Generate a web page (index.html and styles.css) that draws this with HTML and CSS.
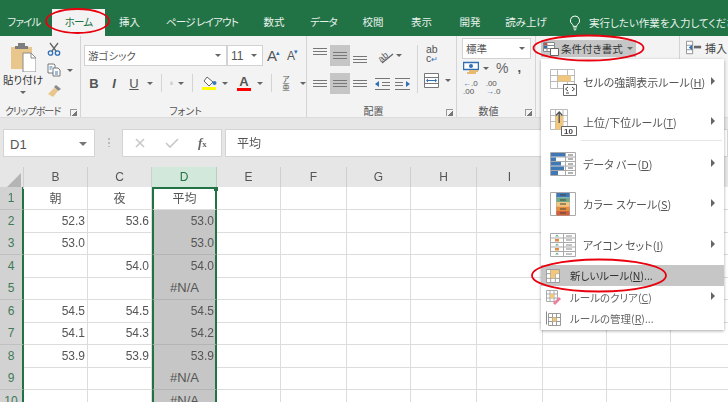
FILE: index.html
```html
<!DOCTYPE html>
<html lang="ja">
<head>
<meta charset="utf-8">
<title>条件付き書式</title>
<link rel="stylesheet" href="styles.css">
</head>
<body>
<div class="app">
  <nav class="tabs">
    <span class="tab w52 kana">ファイル</span>
    <span class="tab active kana">ホーム</span>
    <span class="tab w49">挿入</span>
    <span class="tab w96 kana">ページ レイアウト</span>
    <span class="tab w48">数式</span>
    <span class="tab w51 kana">データ</span>
    <span class="tab w48">校閲</span>
    <span class="tab w49">表示</span>
    <span class="tab w48">開発</span>
    <span class="tab w66">読み上げ</span>
    <span class="tell">
      <svg width="12" height="16" viewBox="0 0 12 16"><path d="M6 1a4.6 4.6 0 0 0-2.6 8.4c.6.5.8 1.2.8 2h3.6c0-.8.2-1.500.8-2A4.600 4.600 0 0 0 6 1zM4.300 13h3.400M4.800 14.800h2.400" fill="none" stroke="#fff" stroke-width="1"/></svg>
      実行したい作業を入力してください
    </span>
  </nav>

  <section class="ribbon">
    <div class="group g-clip">
      <div class="body clip-body">
        <div class="paste">
          <svg width="26" height="30" viewBox="0 0 26 30"><path d="M1 5h21v22H1z" fill="#e9c78c"/><path d="M8 1h7v3h3v3H5V4h3z" fill="#7d7d7d"/><path d="M13 11h8l5 5v14H13z" fill="#fff" stroke="#8a8a8a"/><path d="M21 11v5h5" fill="none" stroke="#8a8a8a"/></svg>
          <span class="paste-label">貼り付け</span>
          <i class="caret"></i>
        </div>
        <div class="clip-tools">
          <svg width="14" height="14" viewBox="0 0 14 14"><path d="M3 1l6 8M11 1L5 9" stroke="#666" stroke-width="1.300" fill="none"/><circle cx="3.500" cy="11" r="2.200" fill="none" stroke="#2f6fb5" stroke-width="1.300"/><circle cx="10.500" cy="11" r="2.200" fill="none" stroke="#2f6fb5" stroke-width="1.300"/></svg>
          <div class="copy-row">
            <svg width="14" height="14" viewBox="0 0 14 14"><path d="M1 1h6l1 1v8H1z" fill="#fff" stroke="#777"/><path d="M6 5h5l2 2v6H6z" fill="#fff" stroke="#777"/><path d="M2.500 4h3M2.500 6h2M8 9h3M8 11h3" stroke="#3b78b8"/></svg>
            <i class="caret"></i>
          </div>
          <svg width="15" height="14" viewBox="0 0 15 14"><path d="M9 1l5 4-3 2-4-4z" fill="#8a8a8a"/><path d="M7 4l4 3-5 6-5-3z" fill="#e9c78c"/></svg>
        </div>
      </div>
      <div class="label"><span class="narrow">クリップボード</span><i class="launch"></i></div>
    </div>

    <div class="group g-font">
      <div class="body">
        <div class="font-row">
          <span class="select s-font">游ゴシック<i class="caret"></i></span>
          <span class="select s-size">11<i class="caret"></i></span>
          <span class="grow">A<sup>▴</sup></span>
          <span class="grow small">A<sup class="blue">▾</sup></span>
        </div>
        <div class="font-tools">
          <b class="fmt">B</b>
          <em class="fmt it">I</em>
          <u class="fmt">U</u>
          <i class="caret"></i>
          <i class="vsep"></i>
          <svg width="14" height="14" viewBox="0 0 14 14"><path d="M1.500 1.500h11v11h-11zM7 1.500v11M1.500 7h11" fill="none" stroke="#999"/><path d="M1 13h12" stroke="#777"/></svg>
          <i class="caret"></i>
          <i class="vsep"></i>
          <span class="fill">
            <svg width="15" height="11" viewBox="0 0 15 11"><path d="M5 1l6 5-4 4-5-5z" fill="#fff" stroke="#666"/><circle cx="12.500" cy="7" r="2" fill="#3b78b8"/></svg>
            <i class="bar yellow"></i>
          </span>
          <i class="caret"></i>
          <span class="fontcolor">A<i class="bar red"></i></span>
          <i class="caret"></i>
          <i class="vsep"></i>
          <span class="ruby">ア<br>亜</span>
          <i class="caret"></i>
        </div>
      </div>
      <div class="label center"><span>フォント</span></div>
    </div>

    <div class="group g-align">
      <div class="body align-body">
        <div class="align-grid">
          <span class="al"><i class="lines top"></i></span>
          <span class="al on"><i class="lines"></i></span>
          <span class="al"><i class="lines bottom"></i></span>
          <span class="orient">
            <svg width="18" height="16" viewBox="0 0 18 16"><text x="1" y="12" font-size="9" fill="#555" transform="rotate(-40 6 9)" class="svgt">ab</text><path d="M5 15L16 6" stroke="#666" stroke-width="1.400"/></svg>
            <i class="caret"></i>
          </span>
          <span class="al"><i class="lines left"></i></span>
          <span class="al on"><i class="lines"></i></span>
          <span class="al"><i class="lines right"></i></span>
          <span class="indents">
            <svg width="16" height="12" viewBox="0 0 16 12"><path d="M0 .5h15M7 4.500h8M7 7.500h8M0 11.500h15" stroke="#777"/><path d="M0 6l4-3v6z" fill="#2f6fb5"/></svg>
            <svg width="16" height="12" viewBox="0 0 16 12"><path d="M0 .5h15M0 4.500h8M0 7.500h8M0 11.500h15" stroke="#777"/><path d="M15 6l-4-3v6z" fill="#2f6fb5"/></svg>
          </span>
        </div>
        <i class="vsep tall"></i>
        <div class="wrap-col">
          <span class="wrap">ab<br>c<span class="wrap-arrow">↵</span></span>
          <span class="merge">
            <svg width="15" height="15" viewBox="0 0 15 15"><path d="M.5.5h14v14H.5zM.5 4.500h14M.5 10.500h14" fill="#fff" stroke="#777"/><path d="M3 7.500h9" stroke="#2f6fb5"/><path d="M2 7.500l2-2v4zM13 7.500l-2-2v4z" fill="#2f6fb5"/></svg>
            <i class="caret"></i>
          </span>
        </div>
      </div>
      <div class="label center"><span>配置</span><i class="launch"></i></div>
    </div>

    <div class="group g-num">
      <div class="body">
        <span class="select s-num">標準<i class="caret"></i></span>
        <div class="num-row">
          <svg width="16" height="15" viewBox="0 0 16 15"><path d="M.5 1.500h15v7H.5z" fill="#fff" stroke="#2f6fb5" stroke-width="1.500"/><circle cx="8" cy="5" r="2" fill="#2f6fb5"/><path d="M6 9h9v2H6zM4 11h9v2H4z" fill="#e9b96e"/></svg>
          <i class="caret"></i>
          <span class="pct">%</span>
          <span class="comma">,</span>
        </div>
        <div class="num-row dec">
          <span><i class="arr">←</i>.0<br>.00</span>
          <span>.00<br><i class="arr">→</i>.0</span>
        </div>
      </div>
      <div class="label center"><span>数値</span><i class="launch"></i></div>
    </div>

    <div class="g-style">
      <span class="cond">
        <svg width="16" height="14" viewBox="0 0 16 14"><path d="M.5.5h11v9H.5zM4 .5v9M.5 3.500h11M.5 6.500h11" fill="#fff" stroke="#888"/><path d="M1 1h3v2H1z" fill="#c0504d"/><path d="M1 4h3v2H1z" fill="#2f6fb5"/><path d="M7.500 6.500h8v7h-8z" fill="#fff" stroke="#666"/></svg>
        条件付き書式<i class="caret"></i>
      </span>
    </div>

    <div class="g-cells">
      <svg width="16" height="15" viewBox="0 0 18 15"><path d="M.5.5h7v14h-7zM.5 5h7M.5 10h7" fill="#fff" stroke="#888"/><path d="M9 7h8" stroke="#666" stroke-width="3"/><path d="M3 7.500l4-3v6z" fill="#2f6fb5"/></svg>
      <span>挿入</span>
    </div>
  </section>

  <div class="band"></div>

  <div class="formula">
    <span class="namebox">D1<i class="caret big"></i></span>
    <span class="dots"></span>
    <span class="fbtns">
      <svg width="12" height="12" viewBox="0 0 12 12"><path d="M2 2l8 8M10 2l-8 8" stroke="#c8c8c8" stroke-width="1.600"/></svg>
      <svg width="14" height="12" viewBox="0 0 14 12"><path d="M1 6l4 4 8-8" stroke="#c8c8c8" stroke-width="1.600" fill="none"/></svg>
      <span class="fx"><em>f</em><small>x</small></span>
    </span>
    <span class="fvalue">平均</span>
  </div>
  <div class="gap"></div>

  <div class="sheet">
    <div class="row head">
      <span class="corner"><i></i></span><span>B</span><span>C</span><span class="sel-h">D</span><span>E</span><span>F</span><span>G</span><span>H</span><span>I</span><span>J</span><span>K</span><span>L</span>
    </div>
    <div class="row">
      <span class="rh">1</span><span class="c mid">朝</span><span class="c mid">夜</span><span class="c mid d first">平均<i class="handle"></i></span><span class="c"></span><span class="c"></span><span class="c"></span><span class="c"></span><span class="c"></span><span class="c"></span><span class="c"></span><span class="c"></span>
    </div>
    <div class="row">
      <span class="rh">2</span><span class="c">52.3</span><span class="c">53.6</span><span class="c d s">53.0</span><span class="c"></span><span class="c"></span><span class="c"></span><span class="c"></span><span class="c"></span><span class="c"></span><span class="c"></span><span class="c"></span>
    </div>
    <div class="row">
      <span class="rh">3</span><span class="c">53.0</span><span class="c"></span><span class="c d s">53.0</span><span class="c"></span><span class="c"></span><span class="c"></span><span class="c"></span><span class="c"></span><span class="c"></span><span class="c"></span><span class="c"></span>
    </div>
    <div class="row">
      <span class="rh">4</span><span class="c"></span><span class="c">54.0</span><span class="c d s">54.0</span><span class="c"></span><span class="c"></span><span class="c"></span><span class="c"></span><span class="c"></span><span class="c"></span><span class="c"></span><span class="c"></span>
    </div>
    <div class="row">
      <span class="rh">5</span><span class="c"></span><span class="c"></span><span class="c err d s">#N/A</span><span class="c"></span><span class="c"></span><span class="c"></span><span class="c"></span><span class="c"></span><span class="c"></span><span class="c"></span><span class="c"></span>
    </div>
    <div class="row">
      <span class="rh">6</span><span class="c">54.5</span><span class="c">54.5</span><span class="c d s">54.5</span><span class="c"></span><span class="c"></span><span class="c"></span><span class="c"></span><span class="c"></span><span class="c"></span><span class="c"></span><span class="c"></span>
    </div>
    <div class="row">
      <span class="rh">7</span><span class="c">54.1</span><span class="c">54.3</span><span class="c d s">54.2</span><span class="c"></span><span class="c"></span><span class="c"></span><span class="c"></span><span class="c"></span><span class="c"></span><span class="c"></span><span class="c"></span>
    </div>
    <div class="row">
      <span class="rh">8</span><span class="c">53.9</span><span class="c">53.9</span><span class="c d s">53.9</span><span class="c"></span><span class="c"></span><span class="c"></span><span class="c"></span><span class="c"></span><span class="c"></span><span class="c"></span><span class="c"></span>
    </div>
    <div class="row">
      <span class="rh">9</span><span class="c"></span><span class="c"></span><span class="c err d s">#N/A</span><span class="c"></span><span class="c"></span><span class="c"></span><span class="c"></span><span class="c"></span><span class="c"></span><span class="c"></span><span class="c"></span>
    </div>
    <div class="row">
      <span class="rh">10</span><span class="c"></span><span class="c"></span><span class="c err d s">#N/A</span><span class="c"></span><span class="c"></span><span class="c"></span><span class="c"></span><span class="c"></span><span class="c"></span><span class="c"></span><span class="c"></span>
    </div>
  </div>

  <div class="menu">
    <div class="mi big">
      <svg width="28" height="28" viewBox="0 0 28 28"><path d="M1.500 1.500h24v19h-24zM1.500 7.500h24M1.500 13.500h24M8.500 1.500v19M18.500 1.500v19" fill="#fff" stroke="#bbb"/><path d="M9 7.500h13v6H9z" fill="#f0c77d"/><path d="M14.500 16.500h13v11h-13z" fill="#fff" stroke="#666"/><path d="M19 19l-2.500 2 2.500 2M23 19l2.500 2-2.500 2M17 25h3" fill="none" stroke="#444"/></svg>
      <span class="mt">セルの強調表示ルール(<u>H</u>)</span><i class="arrow"></i>
    </div>
    <div class="mi big">
      <svg width="28" height="28" viewBox="0 0 28 28"><path d="M1.500 1.500h17v20h-17zM1.500 7.500h17M1.500 13.500h17M6.500 1.500v20M14 1.500v20" fill="#fff" stroke="#bbb"/><path d="M6.500 7.500h7.500v14H6.500z" fill="#f0c77d"/><path d="M10.200 15V4M7 7.500l3.200-3.500 3.200 3.500" fill="none" stroke="#555" stroke-width="1.400"/><path d="M12.500 18.500h15v9h-15z" fill="#fff" stroke="#666"/><text x="15" y="26" font-size="8" font-weight="700" fill="#444" class="svgt">10</text></svg>
      <span class="mt">上位/下位ルール(<u>T</u>)</span><i class="arrow"></i>
    </div>
    <div class="msep"></div>
    <div class="mi big">
      <svg width="26" height="24" viewBox="0 0 26 24"><path d="M.500.500h25v23H.500zM15.500.500v23M.5 5h25M.5 9.500h25M.5 14h25M.5 18.500h25" fill="#fff" stroke="#aaa"/><path d="M1 1h14v3.500H1zM1 5.500h5v3.500H1zM1 10h10v3.500H1zM1 14.500h13v3.500H1zM1 19h7v4H1z" fill="#3f78b5"/><path d="M18 3h5M18 7h5M18 12h5M18 16h5M18 21h5" stroke="#666"/></svg>
      <span class="mt">データ バー(<u>D</u>)</span><i class="arrow"></i>
    </div>
    <div class="mi big">
      <svg width="26" height="24" viewBox="0 0 26 24"><path d="M.500.500h25v23H.500zM6.500.500v23M19.500.500v23" fill="#fff" stroke="#aaa"/><path d="M6.500 1h13v4.500h-13z" fill="#3f78b5"/><path d="M6.500 5.500h13v4.500h-13z" fill="#6fa98a"/><path d="M6.500 10h13v4.500h-13z" fill="#f0c77d"/><path d="M6.500 14.500h13v4.500h-13z" fill="#e78c3c"/><path d="M6.500 19h13v4.500h-13z" fill="#d2603a"/><path d="M10 3h6M10 8h6M10 12h6M10 17h6M10 21h6" stroke="#444"/></svg>
      <span class="mt">カラー スケール(<u>S</u>)</span><i class="arrow"></i>
    </div>
    <div class="mi big">
      <svg width="26" height="24" viewBox="0 0 26 24"><path d="M.500.500h25v23H.500zM.5 5h25M.5 9.500h25M.5 14h25M.5 18.500h25M13.500.500v23" fill="#fff" stroke="#aaa"/><path d="M7 1.500l2 2H5zM7 10.500l2 2H5zM7 19.500l2 2H5z" fill="#6fa98a"/><path d="M5 6h4v2.500H5zM5 15h4v2.500H5z" fill="#e78c3c"/><path d="M16 3h6M16 7h6M16 12h6M16 16h6M16 21h6" stroke="#888"/></svg>
      <span class="mt">アイコン セット(<u>I</u>)</span><i class="arrow"></i>
    </div>
    <div class="mi small on">
      <svg width="14" height="14" viewBox="0 0 15 15"><path d="M.5.5h14v14H.5zM.5 5h14M.5 10h14M5 .5v14M10 .5v14" fill="#fff" stroke="#999"/><path d="M5 1h9v4H5zM5 5h5v5H5z" fill="#f0c77d"/></svg>
      <span class="mt">新しいルール(<u>N</u>)...</span>
    </div>
    <div class="mi small dim">
      <svg width="15" height="15" viewBox="0 0 15 15"><path d="M.5.5h11v11H.5zM.5 4h11M.5 8h11M4 .5v11M8 .5v11" fill="#fff" stroke="#aaa"/><path d="M4 4h4v4H4z" fill="#f0c77d"/><path d="M7 13l6-6 2 2-6 6z" fill="#ec7f9a"/></svg>
      <span class="mt">ルールのクリア(<u>C</u>)</span><i class="arrow"></i>
    </div>
    <div class="mi small dim">
      <svg width="15" height="15" viewBox="0 0 15 15"><path d="M.5.500v13" stroke="#888"/><path d="M2.500 2.500h12v12h-12zM2.500 6.500h12M2.500 10.500h12M6.500 2.500v12M10.500 2.500v12" fill="#fff" stroke="#999"/><path d="M6.500 6.500h4v4h-4z" fill="#f0c77d"/></svg>
      <span class="mt">ルールの管理(<u>R</u>)...</span>
    </div>
  </div>

  <svg class="marks" width="728" height="402" viewBox="0 0 728 402">
    <ellipse cx="77.500" cy="21" rx="31.500" ry="12"/>
    <ellipse cx="588.500" cy="48" rx="55" ry="12.500"/>
    <ellipse cx="599" cy="275.500" rx="67" ry="16"/>
  </svg>
</div>
</body>
</html>
```

FILE: styles.css
```css
* { box-sizing: border-box; }
html, body { margin: 0; padding: 0; background: #fff; }
body { width: 728px; height: 402px; overflow: hidden; }
i, em { font-style: normal; }
.app {
  position: relative;
  width: 728px;
  height: 402px;
  overflow: hidden;
  font-family: "Noto Sans CJK JP", "Liberation Sans", sans-serif;
  font-feature-settings: "palt";
  font-size: 11px;
  color: #444;
  filter: blur(0.3px);
}
.svgt { font-family: "Liberation Sans", sans-serif; }

/* title tabs */
.tabs {
  height: 36px;
  background: #217346;
  color: #e8f2ec;
  display: flex;
  align-items: flex-end;
  font-size: 10.5px;
  line-height: 26px;
  white-space: nowrap;
}
.tab { display: block; height: 27px; text-align: center; flex: none; }
.kana { letter-spacing: -0.8px; }
.w52 { width: 52px; padding-right: 4px; }
.w49 { width: 49px; }
.w96 { width: 96px; }
.w48 { width: 48px; }
.w51 { width: 51px; }
.w66 { width: 66px; padding-right: 2px; }
.active {
  width: 53px;
  background: #f3f3f3;
  color: #217346;
}
.tell { margin-left: 9px; display: flex; align-items: center; gap: 8px; height: 27px; font-size: 10.5px; flex: none; }

/* ribbon */
.ribbon {
  height: 82px;
  background: #f3f3f3;
  display: flex;
  border-bottom: 1px solid #dcdcdc;
}
.group {
  display: flex;
  flex-direction: column;
  border-right: 1px solid #d4d4d4;
  flex: none;
}
.body { flex: 1; min-height: 0; }
.label {
  height: 15px;
  font-size: 10px;
  line-height: 17px;
  color: #555;
  position: relative;
  white-space: nowrap;
}
.narrow { letter-spacing: -0.9px; }
.label.center { text-align: center; }
.g-clip .label { padding-left: 5px; }
.g-font .label { padding-right: 16px; }
.g-align .label { padding-right: 16px; }
.g-num .label { padding-right: 15px; }
.launch {
  position: absolute;
  right: 3px;
  bottom: 1px;
  width: 7px;
  height: 7px;
  border-left: 1px solid #999;
  border-top: 1px solid #999;
  background: linear-gradient(135deg, transparent 55%, #777 55%);
}
.caret {
  display: inline-block;
  width: 0;
  height: 0;
  border-left: 3px solid transparent;
  border-right: 3px solid transparent;
  border-top: 3px solid #666;
  flex: none;
}
.caret.big { border-width: 4px 4px 0; border-top-color: #777; }

.g-clip { width: 81px; }
.clip-body { display: flex; padding: 5px 0 0 3px; }
.paste { width: 40px; display: flex; flex-direction: column; align-items: center; }
.paste svg { margin-top: 1px; }
.paste-label { font-size: 10.5px; line-height: 14px; margin-top: 1px; white-space: nowrap; color: #333; }
.paste .caret { margin-top: 4px; }
.clip-tools { margin-left: 4px; display: flex; flex-direction: column; gap: 7px; padding-top: 1px; }
.copy-row { display: flex; align-items: center; gap: 6px; }

.g-font { width: 226px; }
.font-row { display: flex; align-items: center; padding: 9px 0 0 3px; }
.select {
  height: 21px;
  background: #fff;
  border: 1px solid #d2d2d2;
  display: flex;
  align-items: center;
  justify-content: space-between;
  padding: 0 5px 0 3px;
  font-size: 10.5px;
  color: #555;
}
.s-font { width: 143px; }
.s-size { width: 36px; font-family: "Liberation Sans", sans-serif; font-size: 12px; }
.grow {
  width: 17px;
  margin-left: 2px;
  font-family: "Liberation Sans", sans-serif;
  font-size: 15px;
  line-height: 18px;
  color: #555;
  text-align: center;
  white-space: nowrap;
}
.grow.small { font-size: 12px; }
.grow sup { font-size: 7px; color: #2f6fb5; vertical-align: 6px; line-height: 0; margin-left: -1px; }
.font-tools {
  display: flex;
  align-items: center;
  height: 22px;
  margin-top: 6px;
  padding-left: 3px;
  color: #555;
}
.fmt { width: 20px; text-align: center; font-size: 13px; font-family: "Liberation Sans", sans-serif; flex: none; }
.it { font-style: italic; font-weight: 700; }
.fmt + .caret { margin-left: 3px; }
.vsep { width: 1px; height: 18px; background: #d4d4d4; margin: 0 8px; flex: none; }
.fill, .fontcolor { display: flex; flex-direction: column; align-items: center; width: 16px; flex: none; }
.bar { display: block; width: 14px; height: 3px; }
.yellow { background: #ffff00; }
.red { background: #f00; }
.fill + .caret { margin: 0 8px 0 5px; }
.fontcolor {
  font-family: "Liberation Sans", sans-serif;
  font-weight: 700;
  font-size: 13px;
  line-height: 12px;
}
.fontcolor + .caret { margin-left: 5px; }
.font-tools > svg + .caret { margin-left: 5px; }
.ruby { font-size: 7.5px; line-height: 8px; margin: 0 8px 0 0; width: 12px; text-align: center; flex: none; }

.g-align { width: 150px; }
.align-body { display: flex; padding: 9px 0 0 3px; }
.align-grid { display: grid; grid-template-columns: 20px 20px 20px 47px; grid-auto-rows: 21px; row-gap: 7px; }
.al { display: flex; align-items: center; justify-content: center; height: 21px; }
.al.on { background: #c6c6c6; }
.lines {
  display: block;
  width: 14px;
  height: 7px;
  border-top: 1px solid #777;
  border-bottom: 1px solid #777;
  background: linear-gradient(#777, #777) 0 2px / 100% 1px no-repeat;
}
.lines.top { align-self: flex-start; margin-top: 3px; }
.lines.bottom { align-self: flex-end; margin-bottom: 3px; }
.orient { display: flex; align-items: center; gap: 1px; padding-left: 7px; }
.indents { display: flex; align-items: center; gap: 4px; padding-left: 5px; }
.vsep.tall { height: 48px; margin: 0 6px 0 0; }
.wrap-col { display: flex; flex-direction: column; gap: 5px; margin-top: -2px; }
.wrap {
  font-family: "Liberation Sans", sans-serif;
  font-size: 10.5px;
  line-height: 9px;
  color: #555;
  height: 24px;
  padding: 2px 0 0 2px;
}
.wrap-arrow { color: #2f6fb5; font-size: 8px; }
.merge { display: flex; align-items: center; gap: 6px; padding-top: 1px; }

.g-num { width: 79px; }
.s-num { width: 69px; margin: 2px 0 0 5px; height: 21px; }
.num-row { display: flex; align-items: center; height: 18px; padding-left: 6px; }
.num-row .caret { margin-left: 4px; }
.pct { font-family: "Liberation Sans", sans-serif; font-size: 14px; color: #666; margin-left: 7px; }
.comma { font-family: "Liberation Sans", sans-serif; font-weight: 700; font-size: 13px; margin-left: 9px; line-height: 10px; color: #555; }
.dec { font-family: "Liberation Sans", sans-serif; font-size: 8px; line-height: 8px; color: #555; gap: 8px; margin-top: 2px; }
.dec .arr { color: #2f6fb5; }

.g-style { width: 144px; flex: none; padding: 4px 0 0 5px; border-right: 1px solid #d4d4d4; }
.cond {
  display: flex;
  align-items: center;
  width: 95px;
  height: 17px;
  background: #c6c6c6;
  padding-left: 2px;
  font-size: 10.5px;
  white-space: nowrap;
  color: #333;
}
.cond svg { margin-right: 2px; flex: none; }
.cond .caret { margin-left: 4px; }
.g-cells { display: flex; align-items: flex-start; gap: 3px; padding: 4px 0 0 6px; font-size: 11px; white-space: nowrap; }

.band { height: 9px; background: #e6e6e6; }
.formula {
  height: 30px;
  background: #e6e6e6;
  display: flex;
  align-items: stretch;
  padding: 2px 0 0 3px;
}
.namebox, .fbtns, .fvalue { background: #fff; border: 1px solid #d4d4d4; }
.namebox {
  width: 92px;
  display: flex;
  align-items: center;
  justify-content: space-between;
  padding: 2px 7px 0 6px;
  font-family: "Liberation Sans", sans-serif;
  font-size: 13px;
  color: #555;
}
.dots {
  width: 2px;
  margin: 9px 12px 10px 13px;
  background: repeating-linear-gradient(#bbb 0 2px, transparent 2px 4px);
}
.fbtns {
  width: 100px;
  display: flex;
  align-items: center;
  gap: 19px;
  padding-left: 11px;
}
.fx { font-family: "Liberation Serif", serif; font-size: 13px; color: #666; white-space: nowrap; font-weight: 700; }
.fx em { font-style: italic; }
.fx small { font-size: 9px; }
.fvalue { margin-left: 3px; flex: 1; padding-left: 11px; line-height: 25px; font-size: 12px; color: #555; }
.gap { height: 10px; background: #e6e6e6; }

/* sheet */
.row {
  display: grid;
  grid-template-columns: 24px 64px 64px 65px 64px 66px 64px 66px 66px 64px 64px 64px;
  height: 22.5px;
}
.row.head {
  height: 20px;
  background: #e6e6e6;
  font-family: "Liberation Sans", sans-serif;
  font-size: 12px;
  color: #555;
  text-align: center;
  line-height: 20px;
}
.row.head span { border-right: 1px solid #cfcfcf; }
.corner { position: relative; }
.corner i {
  position: absolute;
  right: 2px;
  bottom: 2px;
  border-left: 14px solid transparent;
  border-bottom: 14px solid #b4b4b4;
}
.row.head .sel-h {
  background: #d2e8da;
  color: #217346;
  border-right-color: #b8cfc0;
  border-bottom: 2px solid #217346;
}
.rh {
  background: #d2d2d2;
  color: #3f7a58;
  border-right: 2px solid #217346;
  border-bottom: 1px solid #c0c0c0;
  font-family: "Liberation Sans", sans-serif;
  font-size: 12px;
  text-align: center;
  line-height: 22px;
  white-space: nowrap;
  overflow: hidden;
}
.c {
  border-right: 1px solid #dcdcdc;
  border-bottom: 1px solid #dcdcdc;
  font-family: "Liberation Sans", sans-serif;
  font-size: 12px;
  color: #555;
  text-align: right;
  padding-right: 2px;
  line-height: 22px;
  white-space: nowrap;
  position: relative;
}
.c.mid {
  text-align: center;
  font-family: "Noto Sans CJK JP", "Liberation Sans", sans-serif;
  font-size: 12px;
  padding-right: 0;
}
.c.d {
  border-left: 2px solid #217346;
  border-right: 2px solid #217346;
  padding-right: 1px;
}
.c.s { background: #c6c6c6; border-bottom-color: #b4b4b4; }
.c.d.mid { padding-right: 0; }
.c.d.err { text-align: center; font-size: 13px; padding-right: 0; }
.handle {
  position: absolute;
  right: -3px;
  top: 0;
  width: 4px;
  height: 4px;
  background: #217346;
}

/* menu */
.menu {
  position: absolute;
  left: 541px;
  top: 59px;
  width: 183px;
  height: 271px;
  background: #fff;
  box-shadow: 0 1px 3px rgba(0,0,0,.35);
  padding-top: 2.5px;
  font-size: 11px;
  color: #555;
}
.mi { display: flex; align-items: center; white-space: nowrap; position: relative; }
.mi.big { height: 40.25px; padding-left: 8px; }
.mi.big svg { width: 28px; flex: none; }
.mi.big .mt { margin-left: 6px; }
.mi.small { height: 21.5px; padding-left: 5px; font-size: 10.5px; }
.mi.small .mt { margin-left: 9px; }
.mi.small.on .mt { margin-left: 10px; }
.mi.on { background: #c6c6c6; color: #333; }
.mi.dim { color: #666; }
.arrow {
  position: absolute;
  right: 9px;
  top: 50%;
  margin-top: -5px;
  border-top: 4px solid transparent;
  border-bottom: 4px solid transparent;
  border-left: 4px solid #666;
}
.msep { height: 1px; background: #e6e6e6; margin: -2px 2px 3px 40px; }

.marks { position: absolute; left: 0; top: 0; pointer-events: none; }
.marks ellipse { fill: none; stroke: #e8000e; stroke-width: 1.8; }
```
